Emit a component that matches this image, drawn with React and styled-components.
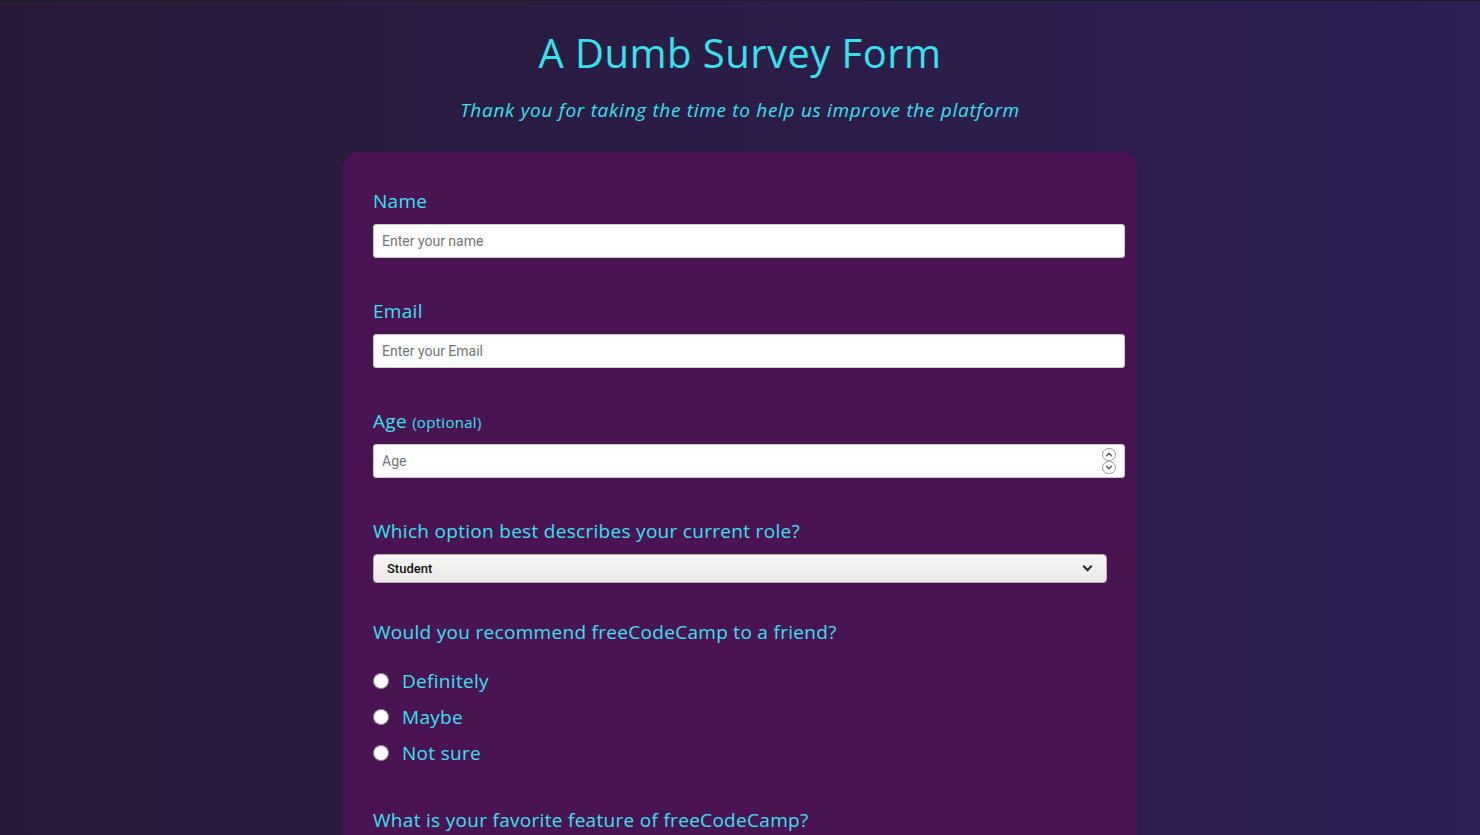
import styled, { createGlobalStyle } from "styled-components";

const GlobalStyle = createGlobalStyle`
  html, body {
    margin: 0;
    padding: 0;
  }
  body {
    font-family: "Open Sans", "DejaVu Sans", sans-serif;
    color: #36e2ec;
    background: linear-gradient(to right, #281a37, #2e1f54);
    min-height: 100vh;
  }
`;

const Page = styled.div`
  border-top: 1px solid #1f1d24;
  padding-bottom: 40px;
`;

const Header = styled.header`
  text-align: center;
  padding-top: 28px;
  margin-bottom: 30px;
`;

const Title = styled.h1`
  margin: 0;
  font-weight: 400;
  font-size: 40px;
  line-height: 48px;
  letter-spacing: 0.45px;
`;

const Description = styled.p`
  margin: 21px 0 0;
  font-style: italic;
  font-size: 19px;
  line-height: 24px;
  letter-spacing: 0.7px;
`;

const Card = styled.form`
  width: 794px;
  box-sizing: border-box;
  margin: 0 auto;
  padding: 38px 30px 30px;
  background: #4a1453;
  border-radius: 15px;
`;

const Group = styled.div`
  margin-bottom: ${({ $gap }) => $gap || 42}px;
`;

const Label = styled.label`
  display: block;
  font-size: 19px;
  line-height: 23px;
  letter-spacing: 0.3px;
  margin-bottom: ${({ $gap }) => $gap || 11}px;
`;

const Hint = styled.span`
  font-size: 15px;
  line-height: 15px;
`;

const TextInput = styled.input`
  display: block;
  width: 100%;
  height: 32px;
  margin: 0;
  padding: 0 8px;
  border: 1px solid #c9c9c9;
  border-radius: 3px;
  background: #fff;
  font-family: Roboto, sans-serif;
  font-size: 14px;
  color: #333;
  -moz-appearance: textfield;

  &::placeholder {
    color: #757575;
  }

  &::-webkit-inner-spin-button,
  &::-webkit-outer-spin-button {
    -webkit-appearance: none;
    margin: 0;
  }
`;

const NumberWrap = styled.div`
  position: relative;
`;

const Spinner = styled.svg`
  position: absolute;
  top: 4px;
  right: -9px;
  width: 14px;
  height: 26px;
  pointer-events: none;
`;

const SelectWrap = styled.div`
  position: relative;

  &::after {
    content: "";
    position: absolute;
    right: 16px;
    top: 9px;
    width: 5px;
    height: 5px;
    border-right: 2px solid #2b2b2b;
    border-bottom: 2px solid #2b2b2b;
    transform: rotate(45deg);
    pointer-events: none;
  }
`;

const Select = styled.select`
  display: block;
  width: 100%;
  height: 29px;
  box-sizing: border-box;
  margin: 0;
  padding: 0 30px 0 13px;
  appearance: none;
  border: 1px solid #b5b3b0;
  border-radius: 4px;
  font-family: Roboto, sans-serif;
  font-size: 13px;
  font-weight: 500;
  color: #111;
  background: linear-gradient(#f6f5f4, #ebeae8);
`;

const RadioList = styled.div`
  display: flex;
  flex-direction: column;
`;

const RadioRow = styled.label`
  display: flex;
  align-items: center;
  height: 36px;
  font-size: 19px;
  letter-spacing: 0.3px;
  cursor: pointer;
`;

const Radio = styled.input`
  width: 16px;
  height: 16px;
  margin: 0 13px 0 0;
`;

function SpinIcon() {
  return (
    <Spinner viewBox="0 0 14 26" fill="none" stroke="#555" strokeLinecap="round" strokeLinejoin="round">
      <rect x="0.5" y="0.5" width="13" height="12" rx="6" stroke="#9a9a9a" />
      <rect x="0.5" y="13.5" width="13" height="12" rx="6" stroke="#9a9a9a" />
      <path d="M4.5 7.8 L7 5.3 L9.5 7.8" strokeWidth="1.3" />
      <path d="M4.5 18.2 L7 20.7 L9.5 18.2" strokeWidth="1.3" />
    </Spinner>
  );
}

export default function App() {
  return (
    <Page>
      <GlobalStyle />
      <Header>
        <Title id="title">A Dumb Survey Form</Title>
        <Description id="description">
          Thank you for taking the time to help us improve the platform
        </Description>
      </Header>
      <Card id="survey-form">
        <Group>
          <Label htmlFor="name">Name</Label>
          <TextInput id="name" type="text" placeholder="Enter your name" />
        </Group>
        <Group>
          <Label htmlFor="email">Email</Label>
          <TextInput id="email" type="email" placeholder="Enter your Email" />
        </Group>
        <Group>
          <Label htmlFor="number">
            Age <Hint>(optional)</Hint>
          </Label>
          <NumberWrap>
            <TextInput id="number" type="number" placeholder="Age" />
            <SpinIcon />
          </NumberWrap>
        </Group>
        <Group $gap={38}>
          <Label htmlFor="dropdown">
            Which option best describes your current role?
          </Label>
          <SelectWrap>
            <Select id="dropdown" defaultValue="student">
              <option value="student">Student</option>
              <option value="job">Full Time Job</option>
              <option value="learner">Full Time Learner</option>
              <option value="preferNo">Prefer not to say</option>
              <option value="other">Other</option>
            </Select>
          </SelectWrap>
        </Group>
        <Group $gap={38}>
          <Label $gap={19}>Would you recommend freeCodeCamp to a friend?</Label>
          <RadioList>
            <RadioRow>
              <Radio type="radio" name="user-recommend" value="definitely" />
              Definitely
            </RadioRow>
            <RadioRow>
              <Radio type="radio" name="user-recommend" value="maybe" />
              Maybe
            </RadioRow>
            <RadioRow>
              <Radio type="radio" name="user-recommend" value="not-sure" />
              Not sure
            </RadioRow>
          </RadioList>
        </Group>
        <Group>
          <Label htmlFor="most-like">
            What is your favorite feature of freeCodeCamp?
          </Label>
        </Group>
      </Card>
    </Page>
  );
}
